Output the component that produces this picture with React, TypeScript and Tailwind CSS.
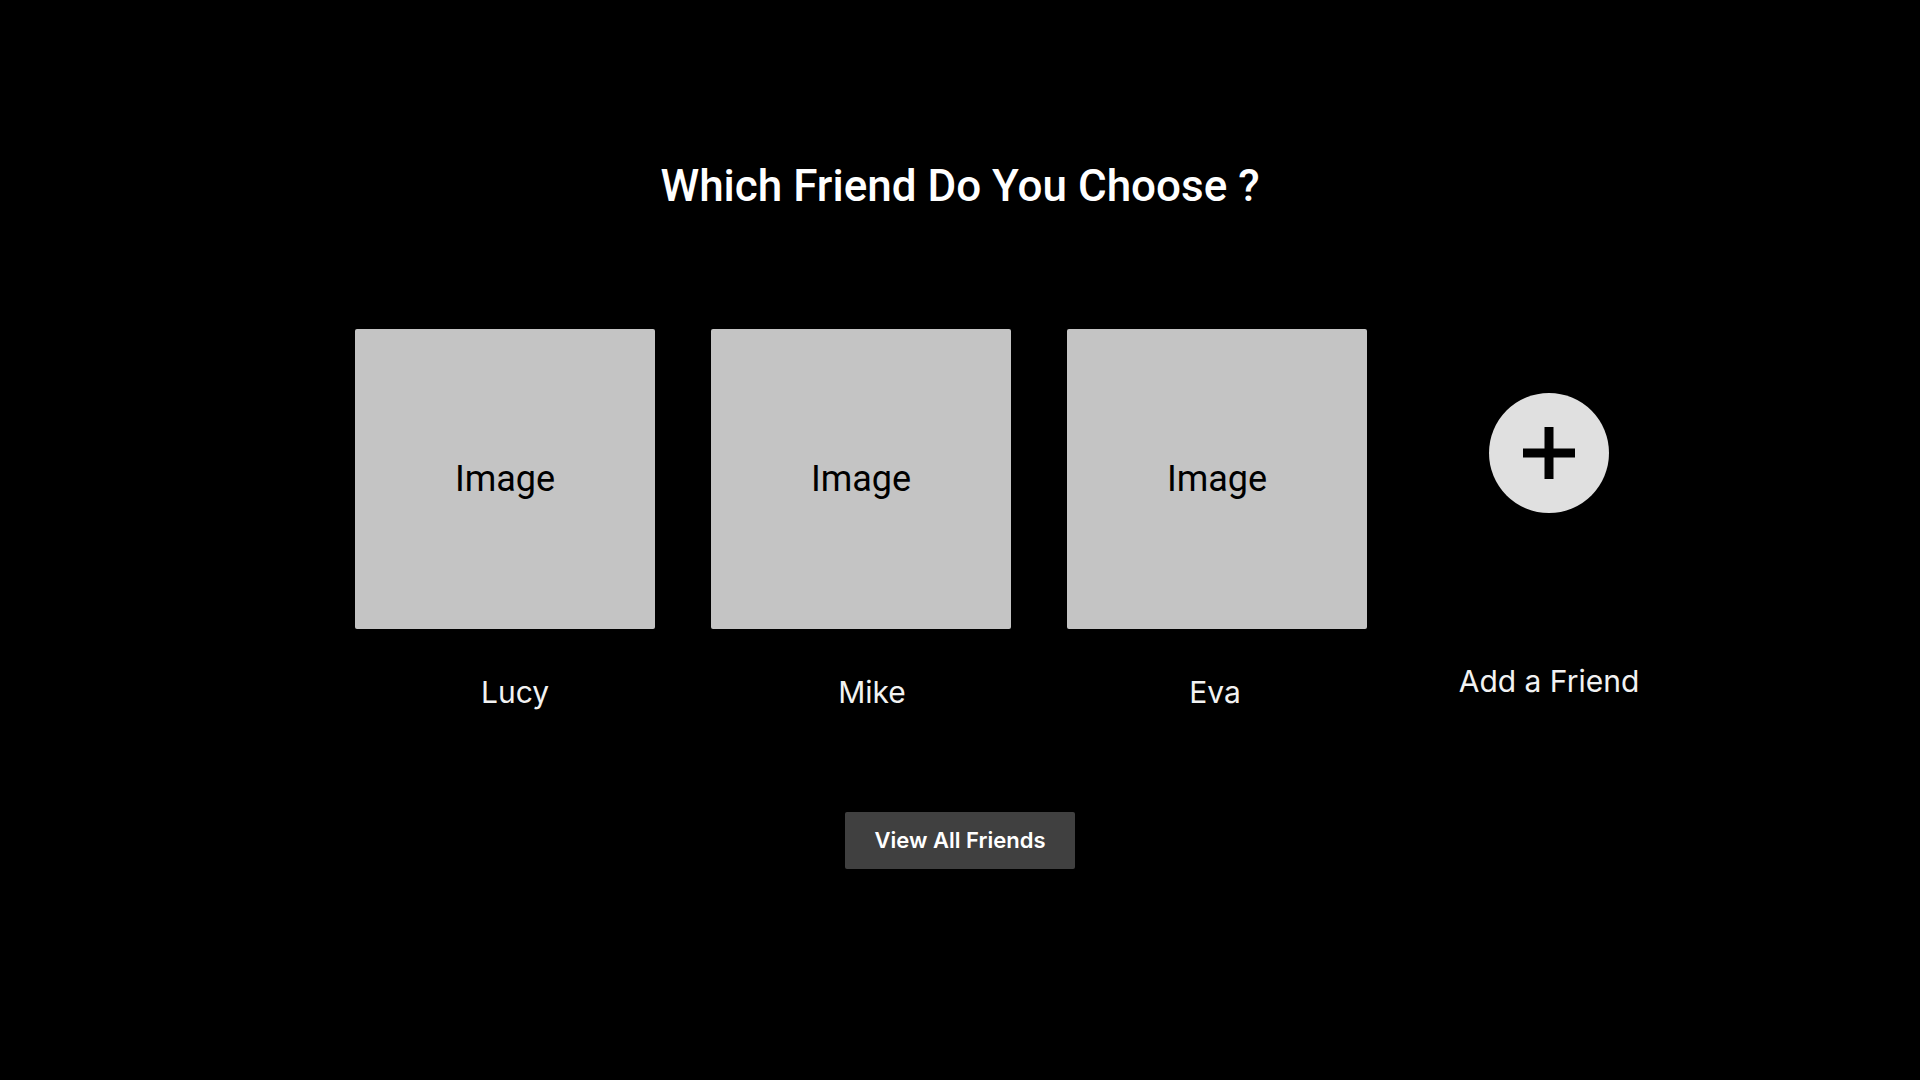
import React from "react";

const friends = [
  { name: "Lucy", nameCls: "pl-[20px]" },
  { name: "Mike", nameCls: "pl-[22px]" },
  { name: "Eva", nameCls: "pr-[4px]" },
];

export default function App() {
  return (
    <div className="w-[1920px] h-[1080px] bg-black text-white overflow-hidden flex flex-col items-center [font-family:Roboto,'Liberation_Sans',sans-serif]">
      <h1 className="mt-[160px] text-[44px] leading-[52px] font-medium text-white">
        Which Friend Do You Choose ?
      </h1>

      <div className="mt-[117px] self-stretch flex pl-[355px]">
        <div className="flex gap-[56px]">
          {friends.map((f) => (
            <div key={f.name} className="flex flex-col w-[300px]">
              <div className="w-[300px] h-[300px] bg-[#c4c4c4] rounded-[2px] flex items-center justify-center text-black text-[36px] leading-none">
                Image
              </div>
              <div
                className={`mt-[45px] h-[36px] text-[30px] leading-[36px] text-center text-[#f2f2f2] [font-family:Inter,'Liberation_Sans',sans-serif] ${f.nameCls}`}
              >
                {f.name}
              </div>
            </div>
          ))}
        </div>
        <div className="ml-[82px] w-[200px] flex flex-col items-center">
          <button className="mt-[64px] w-[120px] h-[120px] rounded-full bg-[#e0e0e0] flex items-center justify-center">
            <svg width="52" height="52" viewBox="0 0 52 52">
              <rect x="21.5" y="0" width="9" height="52" fill="#000" />
              <rect x="0" y="21.5" width="52" height="9" fill="#000" />
            </svg>
          </button>
          <div className="mt-[150px] text-[30px] leading-[36px] text-[#f2f2f2] whitespace-nowrap [font-family:Inter,'Liberation_Sans',sans-serif]">
            Add a Friend
          </div>
        </div>
      </div>

      <button className="mt-[102px] w-[230px] h-[57px] bg-[#404040] rounded-[2px] text-white text-[22px] font-semibold [font-family:Inter,'Liberation_Sans',sans-serif]">
        View All Friends
      </button>
    </div>
  );
}
